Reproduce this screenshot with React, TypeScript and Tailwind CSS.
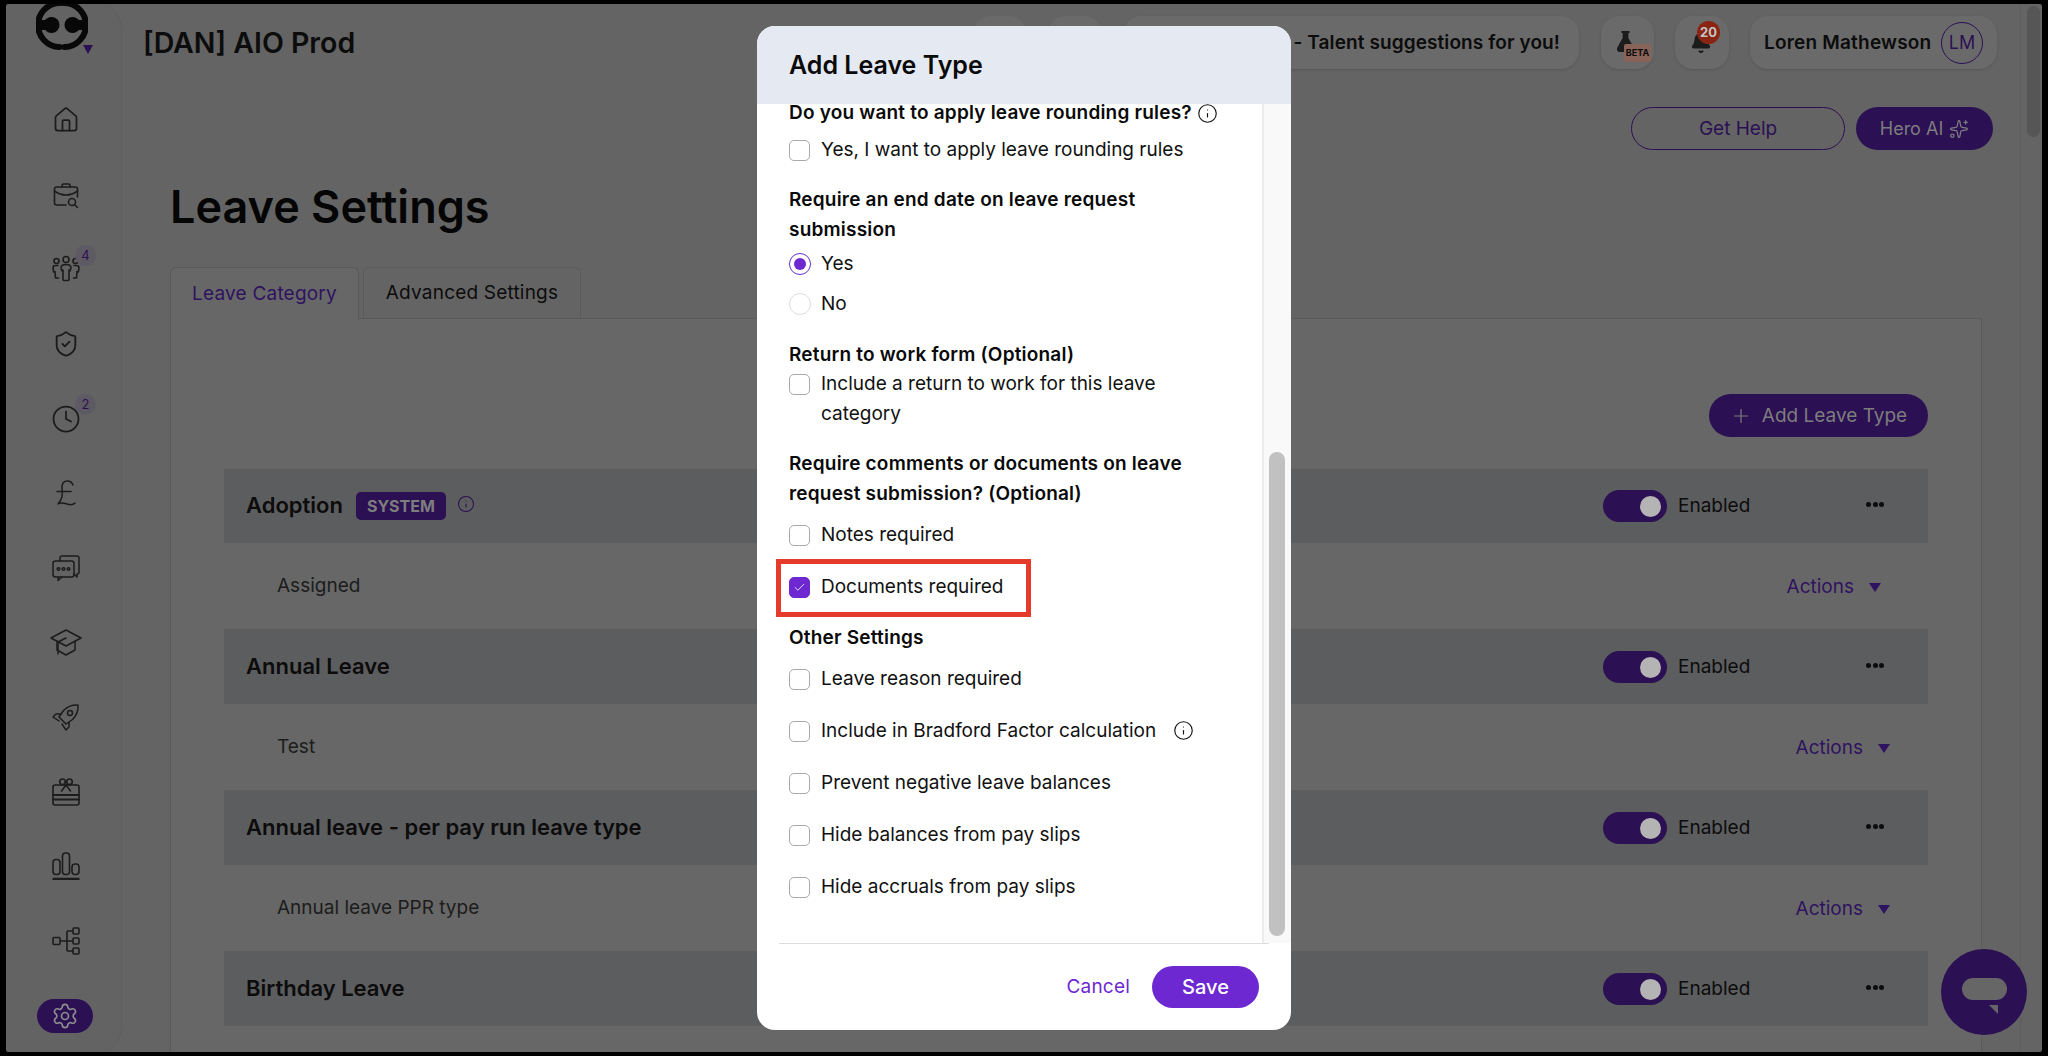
import { ReactNode } from "react";
import {
  Bell,
  Check,
  Clock,
  FlaskConical,
  House,
  Info,
  Plus,
  Settings,
  ShieldCheck,
  Sparkles,
} from "lucide-react";

const FONT = "font-['Inter','Noto_Sans',sans-serif]";

function BriefcaseSearch() {
  return (
    <svg width="28" height="28" viewBox="0 0 28 28" fill="none" stroke="#1c1c1c" strokeWidth="1.6" strokeLinecap="round" strokeLinejoin="round">
      <path d="M10 6V4.500A1.500 1.500 0 0 1 11.500 3h5A1.500 1.500 0 0 1 18 4.500V6" />
      <path d="M14 24H4.500A2 2 0 0 1 2.500 22V8a2 2 0 0 1 2-2h19a2 2 0 0 1 2 2v8" />
      <path d="M2.500 10c4 3 8 4 11.500 4s7.500-1 11.500-4" />
      <circle cx="20" cy="21" r="3.500" />
      <path d="M22.800 23.800 25.500 26.500" />
    </svg>
  );
}

function People() {
  return (
    <svg width="28" height="28" viewBox="0 0 28 28" fill="none" stroke="#1c1c1c" strokeWidth="1.6" strokeLinecap="round" strokeLinejoin="round">
      <circle cx="14" cy="4.500" r="3" />
      <circle cx="4.500" cy="6" r="2.500" />
      <circle cx="23.500" cy="6" r="2.500" />
      <path d="M9 13c0-2 2-3.500 5-3.500s5 1.500 5 3.500l-1 3-1-1v9.500a1 1 0 0 1-1 1h-4a1 1 0 0 1-1-1V15l-1 1z" />
      <path d="M6 10.500H3.500C2 10.500 1 11.500 1 13l.7 4 1.300-.5.500 6.500h3" />
      <path d="M22 10.500h2.500c1.500 0 2.500 1 2.500 2.500l-.7 4-1.300-.5-.5 6.500h-3" />
    </svg>
  );
}

function ChatBubbles() {
  return (
    <svg width="28" height="28" viewBox="0 0 28 28" fill="none" stroke="#1c1c1c" strokeWidth="1.5" strokeLinecap="round" strokeLinejoin="round">
      <path d="M8 7V4a2 2 0 0 1 2-2h15a2 2 0 0 1 2 2v14a2 2 0 0 1-2 2v3l-3-3" />
      <rect x="1" y="7" width="21" height="16" rx="2.500" />
      <path d="M6 23l0 3.500 4-3.500" />
      <circle cx="6.500" cy="15" r="1.300" />
      <circle cx="11.500" cy="15" r="1.300" />
      <circle cx="16.500" cy="15" r="1.300" />
    </svg>
  );
}

function GradCap() {
  return (
    <svg width="32" height="30" viewBox="0 0 32 30" fill="none" stroke="#1c1c1c" strokeWidth="1.5" strokeLinecap="round" strokeLinejoin="round">
      <path d="M16 3 31 11 16 19 1 11z" />
      <path d="M7 14.500V23l9 5 9-5v-8.500" />
      <path d="M16 11 8 15v12" />
    </svg>
  );
}

function RocketIcon() {
  return (
    <svg width="28" height="28" viewBox="0 0 28 28" fill="none" stroke="#1c1c1c" strokeWidth="1.5" strokeLinecap="round" strokeLinejoin="round">
      <path d="M26 2c-5.500-.5-10.500 1.500-14.500 5.500l-4.500 6.500 7 7 6.500-4.500C24.500 12.500 26.500 7.500 26 2z" />
      <circle cx="18" cy="10" r="2.500" />
      <path d="M8.500 11H4L1 14l6 4" />
      <path d="M17 19.500V24l-3 3-4-6" />
    </svg>
  );
}

function GiftCard() {
  return (
    <svg width="28" height="28" viewBox="0 0 28 28" fill="none" stroke="#1c1c1c" strokeWidth="1.6" strokeLinecap="round" strokeLinejoin="round">
      <rect x="1" y="7" width="26" height="20" rx="2" />
      <path d="M1 17h26M1 21.500h26" strokeWidth="2" />
      <path d="M14 7 9.500 13M14 7l4.500 6" />
      <circle cx="10.500" cy="3.800" r="2.800" />
      <circle cx="17.500" cy="3.800" r="2.800" />
    </svg>
  );
}

function Bars() {
  return (
    <svg width="28" height="28" viewBox="0 0 28 28" fill="none" stroke="#1c1c1c" strokeWidth="1.600">
      <rect x="1" y="7.500" width="7" height="15" rx="3" />
      <rect x="10.500" y="1" width="7" height="21.500" rx="3" />
      <rect x="20" y="12" width="7" height="10.500" rx="3" />
      <path d="M0.500 27h27" strokeWidth="2.500" />
    </svg>
  );
}

function Tree() {
  return (
    <svg width="28" height="28" viewBox="0 0 28 28" fill="none" stroke="#1c1c1c" strokeWidth="1.600">
      <rect x="1" y="10.500" width="7" height="7" rx="1" />
      <rect x="21" y="1" width="6" height="6" rx="1" />
      <rect x="21" y="11" width="6" height="6" rx="1" />
      <rect x="21" y="21" width="6" height="6" rx="1" />
      <path d="M8 14h13M15 4v20M15 4h6M15 24h6" />
    </svg>
  );
}

function PoundSign() {
  return (
    <svg width="28" height="28" viewBox="0 0 28 28" fill="none" stroke="#1c1c1c" strokeWidth="1.500" strokeLinecap="round" strokeLinejoin="round">
      <path d="M21 6c-1-2.500-3-4-5.500-4C12 2 10 4.500 10 8c0 6 2 10-4 17 3-2 6-1 9 0s6 1 8-1" />
      <path d="M5 12.500h14" />
    </svg>
  );
}

function Logo() {
  return (
    <svg width="52" height="52" viewBox="0 0 52 52" fill="none">
      <path d="M24.500 4A22 22 0 0 0 23.500 48" stroke="#080808" strokeWidth="6" strokeLinecap="round" />
      <path d="M27.500 4A22 22 0 0 1 28.500 48" stroke="#080808" strokeWidth="6" strokeLinecap="round" />
      <path d="M4 21h12v10H4z" fill="#080808" />
      <path d="M36 21h12v10H36z" fill="#080808" />
      <circle cx="15.500" cy="26" r="8" fill="#080808" />
      <circle cx="36.500" cy="26" r="8" fill="#080808" />
    </svg>
  );
}

const navIcons: { icon: ReactNode; badge?: string }[] = [
  { icon: <House size={28} strokeWidth={1.5} color="#1c1c1c" /> },
  { icon: <BriefcaseSearch /> },
  { icon: <People />, badge: "4" },
  { icon: <ShieldCheck size={28} strokeWidth={1.6} color="#1c1c1c" /> },
  { icon: <Clock size={30} strokeWidth={1.4} color="#1c1c1c" />, badge: "2" },
  { icon: <PoundSign /> },
  { icon: <ChatBubbles /> },
  { icon: <GradCap /> },
  { icon: <RocketIcon /> },
  { icon: <GiftCard /> },
  { icon: <Bars /> },
  { icon: <Tree /> },
];

function Sidebar() {
  return (
    <aside className="flex h-full w-[116px] shrink-0 flex-col rounded-r-[24px] border-r border-[#5e5e5e] bg-[#636363]">
      <div className="relative h-[76px] pl-[30px]">
        <div className="-mt-[5px]">
          <Logo />
        </div>
        <span className="absolute left-[77px] top-[41px] h-0 w-0 border-x-[5px] border-t-[9px] border-x-transparent border-t-[#2c1054]" />
      </div>
      <nav className="flex flex-col">
        {navIcons.map((item, i) => (
          <div key={i} className="relative flex h-[74.600px] items-center justify-center pl-[4px] first:mt-[3px]">
            {item.icon}
            {item.badge && (
              <span className="absolute left-[69px] top-[13px] flex h-[21px] w-[21px] items-center justify-center rounded-full bg-[#5d5a63] text-[13px] text-[#2c1054]">
                {item.badge}
              </span>
            )}
          </div>
        ))}
      </nav>
      <div className="ml-[31px] mt-[21px] flex h-[34px] w-[56px] items-center justify-center rounded-full bg-[#2c1054]">
        <Settings size={28} strokeWidth={1.4} color="#8d8d8d" />
      </div>
    </aside>
  );
}

function TopBar() {
  return (
    <header className="flex items-center justify-between pl-[21px] pr-[23px] pt-[12px]">
      <h1 className="text-[28.500px] font-semibold leading-[53px] text-[#0c0c0c]">[DAN] AIO Prod</h1>
      <div className="flex items-center">
        <div className="mr-[21px] h-[53px] w-[54px] rounded-[18px] bg-[#6a6a6a]" />
        <div className="mr-[21px] h-[53px] w-[54px] rounded-[18px] bg-[#6a6a6a]" />
        <div className="mr-[22px] flex h-[53px] w-[456px] items-center justify-end rounded-[18px] bg-[#6a6a6a] pr-[19px] pt-[2px] shadow-sm">
          <span className="text-[19px] font-semibold tracking-[0.1px] text-[#0c0c0c]">- Talent suggestions for you!</span>
        </div>
        <div className="relative mr-[21px] flex h-[53px] w-[53px] items-center justify-center rounded-[18px] bg-[#6a6a6a] shadow-sm">
          <FlaskConical size={23} fill="#1c1c1c" color="#1c1c1c" className="-translate-x-[2px] -translate-y-[1px]" />
          <span className="absolute left-[23px] top-[28px] flex h-[18px] w-[27px] items-center justify-center rounded-[2px] bg-[#8a6358] text-[9px] font-bold text-[#0c0c0c]">
            BETA
          </span>
        </div>
        <div className="relative mr-[21px] flex h-[53px] w-[54px] items-center justify-center rounded-[18px] bg-[#6a6a6a] shadow-sm">
          <Bell size={22} fill="#1c1c1c" color="#1c1c1c" className="-translate-x-[1px]" />
          <span className="absolute left-[22px] top-[5px] flex h-[23px] w-[23px] items-center justify-center rounded-full bg-[#8a2413] text-[13px] font-bold text-[#c4c4c4]">
            20
          </span>
        </div>
        <div className="flex h-[53px] w-[247px] items-center justify-between rounded-[18px] bg-[#6a6a6a] pl-[14px] pr-[14px] shadow-sm">
          <span className="pt-[2px] text-[19px] font-semibold tracking-[0.2px] text-[#0c0c0c]">Loren Mathewson</span>
          <span className="flex h-[42px] w-[42px] items-center justify-center rounded-full border border-[#2c1054] text-[18px] text-[#2c1054]">
            LM
          </span>
        </div>
      </div>
    </header>
  );
}

type LeaveRow = { title: string; sub: string; system?: boolean; wideActions?: boolean };

const leaveRows: LeaveRow[] = [
  { title: "Adoption", sub: "Assigned", system: true, wideActions: true },
  { title: "Annual Leave", sub: "Test" },
  { title: "Annual leave - per pay run leave type", sub: "Annual leave PPR type" },
];

function RowHeader({ title, system }: { title: string; system?: boolean }) {
  return (
    <div className="flex h-[74px] items-center bg-[#5c5d5f] pl-[22px] pr-[44px]">
      <span className="pb-[2px] text-[22px] font-semibold text-[#0c0c0c]">{title}</span>
      {system && (
        <>
          <span className="ml-[13px] flex h-[28px] w-[90px] items-center justify-center rounded-[5px] bg-[#2c1054] text-[16px] font-bold text-[#7d7d7d]">
            SYSTEM
          </span>
          <Info size={18} strokeWidth={1.4} color="#2c1054" className="ml-[11px] -translate-y-[2px]" />
        </>
      )}
      <span className="ml-auto flex h-[32px] w-[64px] items-center justify-end rounded-full bg-[#2c1054] pr-[6px]">
        <span className="h-[21px] w-[21px] rounded-full bg-[#b4b4b4]" />
      </span>
      <span className="ml-[11px] w-[188px] text-[19px] text-[#0c0c0c]">Enabled</span>
      <span className="flex -translate-y-[2px] gap-[1.500px]">
        <span className="h-[5px] w-[5px] rounded-full bg-[#0c0c0c]" />
        <span className="h-[5px] w-[5px] rounded-full bg-[#0c0c0c]" />
        <span className="h-[5px] w-[5px] rounded-full bg-[#0c0c0c]" />
      </span>
    </div>
  );
}

function LeaveRowItem({ row }: { row: LeaveRow }) {
  return (
    <div>
      <RowHeader title={row.title} system={row.system} />
      <div className="flex h-[87px] items-center justify-between border-b border-[#5c5d5f] pl-[53px]">
        <span className="text-[19px] text-[#1c1c1c]">{row.sub}</span>
        <span className={`flex items-center gap-[15px] pt-[2px] text-[19px] text-[#2f1360] ${row.wideActions ? "pr-[47px]" : "pr-[38px]"}`}>
          Actions
          <span className="h-0 w-0 border-x-[6px] border-t-[9px] border-x-transparent border-t-[#2f1360]" />
        </span>
      </div>
    </div>
  );
}

function Background() {
  return (
    <div className="flex h-full min-w-0 flex-1 flex-col overflow-hidden bg-[#646464]">
      <TopBar />
      <div className="mt-[38px] flex justify-end gap-[11px] pr-[27px]">
        <button className="h-[43px] w-[214px] rounded-full border border-[#2c1054] pt-[2px] text-[19px] text-[#2c1054]">Get Help</button>
        <button className="flex h-[43px] w-[137px] items-center justify-center gap-[6px] rounded-full bg-[#2c1054] text-[18px] text-[#7d7d7d]">
          Hero AI <Sparkles size={20} strokeWidth={1.5} />
        </button>
      </div>
      <div className="pl-[48px] pr-[38px]">
        <h2 className="mt-[31px] text-[45px] font-semibold leading-[52px] text-[#050505]">Leave Settings</h2>
        <div className="mt-[34px] flex gap-[4px]">
          <div className="relative z-10 -mb-px flex h-[52px] w-[189px] items-center justify-center rounded-t-[6px] border border-b-0 border-[#5a5a5a] bg-[#676767] pt-[2px] text-[19px] tracking-[0.2px] text-[#2f1360]">
            Leave Category
          </div>
          <div className="flex h-[51px] w-[218px] items-center justify-center rounded-t-[6px] border border-b-0 border-[#5a5a5a] text-[19px] tracking-[0.2px] text-[#0c0c0c]">
            Advanced Settings
          </div>
        </div>
        <section className="h-[800px] border border-[#5a5a5a] bg-[#676767] px-[53px] pt-[75px]">
          <div className="flex justify-end">
            <button className="flex h-[43px] w-[219px] items-center justify-center gap-[10px] rounded-full bg-[#2c1054] pt-[1px] text-[19px] text-[#7d7d7d]">
              <Plus size={22} strokeWidth={1.300} /> Add Leave Type
            </button>
          </div>
          <div className="mt-[32px]">
            {leaveRows.map((row) => (
              <LeaveRowItem key={row.title} row={row} />
            ))}
            <RowHeader title="Birthday Leave" />
          </div>
        </section>
      </div>
    </div>
  );
}

function PageScrollbar() {
  return (
    <div className="h-full w-[22px] shrink-0 border-l border-[#5e5e5e] bg-[#646464] pl-[6px] pr-[2px] pt-[2px]">
      <div className="h-[131px] rounded-full bg-[#565656]" />
    </div>
  );
}

function CheckRow({ label, checked, children }: { label: string; checked?: boolean; children?: ReactNode }) {
  return (
    <label className="relative flex items-start text-[19px] leading-[30px] text-[#111]">
      <span
        className={`mr-[11px] mt-[4.500px] flex h-[21px] w-[21px] shrink-0 items-center justify-center rounded-[5px] border ${
          checked ? "border-[#6d28d1] bg-[#6d28d1]" : "border-[#a9a9a9] bg-white"
        }`}
      >
        {checked && <Check size={13} strokeWidth={1.500} color="#fff" />}
      </span>
      <span>{label}</span>
      {children}
    </label>
  );
}

function RadioRow({ label, checked }: { label: string; checked?: boolean }) {
  return (
    <div className="flex items-center text-[19px] leading-[30px] text-[#111]">
      <span
        className={`mr-[10px] flex h-[22px] w-[22px] items-center justify-center rounded-full border ${
          checked ? "border-[#6d28d1]" : "border-[#dcdcdc]"
        }`}
      >
        {checked && <span className="h-[12px] w-[12px] rounded-full bg-[#6d28d1]" />}
      </span>
      {label}
    </div>
  );
}

function SectionTitle({ children }: { children: ReactNode }) {
  return <h4 className="text-[19px] font-semibold leading-[30px] tracking-[0.2px] text-[#0a0a0a]">{children}</h4>;
}

function Modal() {
  return (
    <div className="absolute left-[757px] top-[26px] flex h-[1004px] w-[534px] flex-col overflow-hidden rounded-[18px] bg-white">
      <div className="flex h-[78px] shrink-0 items-center bg-[#e5e9f2] pl-[32px] pt-[2px]">
        <h3 className="text-[25px] font-semibold text-[#0a0a0a]">Add Leave Type</h3>
      </div>
      <div className="flex h-[839px] shrink-0 overflow-hidden">
        <div className="w-[505px] overflow-hidden pl-[32px] pr-[40px]">
          <h4 className="flex h-[18px] items-center gap-[5px] whitespace-nowrap text-[19px] font-semibold leading-[18px] tracking-[0.2px] text-[#0a0a0a]">
            Do you want to apply leave rounding rules?
            <Info size={21} strokeWidth={1.300} color="#111" />
          </h4>
          <div className="mt-[13px]">
            <CheckRow label="Yes, I want to apply leave rounding rules" />
          </div>
          <div className="mt-[20px]">
            <SectionTitle>Require an end date on leave request submission</SectionTitle>
          </div>
          <div className="mt-[4px]">
            <RadioRow label="Yes" checked />
          </div>
          <div className="mt-[10px]">
            <RadioRow label="No" />
          </div>
          <div className="mt-[21px]">
            <SectionTitle>Return to work form (Optional)</SectionTitle>
          </div>
          <div className="-mt-px">
            <CheckRow label="Include a return to work for this leave category" />
          </div>
          <div className="mt-[20px]">
            <SectionTitle>Require comments or documents on leave request submission? (Optional)</SectionTitle>
          </div>
          <div className="mt-[11px]">
            <CheckRow label="Notes required" />
          </div>
          <div className="mt-[22px]">
            <CheckRow label="Documents required" checked>
              <span className="absolute -left-[13px] -top-[13px] h-[58px] w-[255px] border-[5px] border-[#e63a2b]" />
            </CheckRow>
          </div>
          <div className="mt-[21px]">
            <SectionTitle>Other Settings</SectionTitle>
          </div>
          <div className="mt-[11px] flex flex-col gap-[22px]">
            <CheckRow label="Leave reason required" />
            <CheckRow label="Include in Bradford Factor calculation">
              <Info size={21} strokeWidth={1.300} color="#111" className="ml-[17px] mt-[4px] shrink-0" />
            </CheckRow>
            <CheckRow label="Prevent negative leave balances" />
            <CheckRow label="Hide balances from pay slips" />
            <CheckRow label="Hide accruals from pay slips" />
          </div>
        </div>
        <div className="h-full w-[29px] border-l-2 border-[#ececec] bg-[#f9f9f9] pl-[5px] pr-[6px] pt-[348px]">
          <div className="h-[484px] rounded-full bg-[#c1c1c1]" />
        </div>
      </div>
      <div className="ml-[22px] mr-[22px] border-t border-[#dedede]" />
      <div className="flex flex-1 items-center justify-end gap-[22px] pr-[32px]">
        <button className="text-[19px] tracking-[0.2px] text-[#6d28d1]">Cancel</button>
        <button className="h-[42px] w-[107px] rounded-full bg-[#6d28d1] text-[20px] font-medium text-white">Save</button>
      </div>
    </div>
  );
}

function ChatButton() {
  return (
    <div className="absolute left-[1941px] top-[949px] flex h-[86px] w-[86px] items-center justify-center rounded-full bg-[#2c1054]">
      <span className="relative h-[22px] w-[45px] -translate-y-[3px] rounded-full bg-[#666]">
        <span className="absolute left-[27px] top-[27px] h-0 w-0 border-l-[9px] border-t-[9px] border-l-transparent border-t-[#666]" />
      </span>
    </div>
  );
}

export default function App() {
  return (
    <div className={`relative h-[1056px] w-[2048px] overflow-hidden bg-black pb-[4px] pl-[6px] pr-[6px] pt-[4px] ${FONT}`}>
      <div className="flex h-full overflow-hidden rounded-[3px] bg-[#646464]">
        <Sidebar />
        <Background />
        <PageScrollbar />
      </div>
      <ChatButton />
      <Modal />
    </div>
  );
}
